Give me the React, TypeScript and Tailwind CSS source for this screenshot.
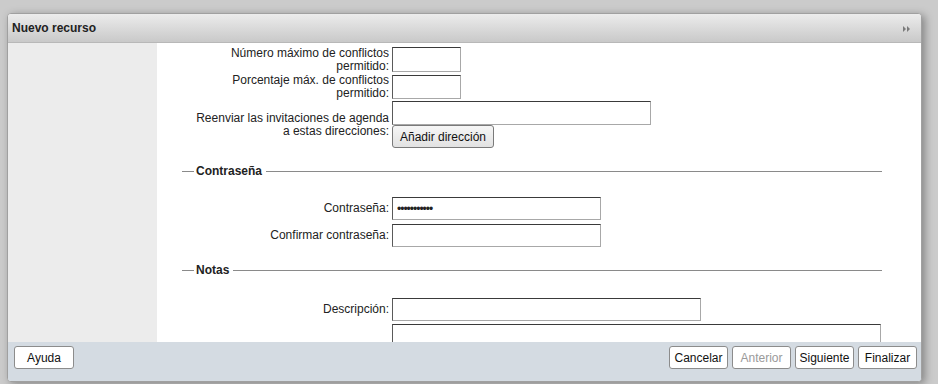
import React from "react";

const inputCls =
  "border border-t-[#3a3a3a] border-l-[#5a5a5a] border-r-[#a8a8a8] border-b-[#a8a8a8] bg-white px-1 text-[12px] outline-none";

const btnCls =
  "h-[23px] w-[59px] rounded-[3px] border border-[#8c8c8c] bg-white text-[12px] leading-none";

function Row({
  label,
  children,
  className = "",
}: {
  label: string;
  children: React.ReactNode;
  className?: string;
}) {
  return (
    <div className={`flex items-center ${className}`}>
      <div className="flex w-[235px] shrink-0 justify-end pr-[3px]">
        <span className="max-w-[196px] text-right leading-[13px]">{label}</span>
      </div>
      <div className="flex flex-col">{children}</div>
    </div>
  );
}

function Legend({ title, className = "" }: { title: string; className?: string }) {
  return (
    <div className={`ml-[25px] mr-[39px] flex h-[14px] items-center ${className}`}>
      <div className="h-px w-[12px] bg-[#8a8a8a]" />
      <span className="pl-[2px] pr-[4px] text-[12px] font-bold leading-[14px] text-[#222]">
        {title}
      </span>
      <div className="h-px flex-1 bg-[#8a8a8a]" />
    </div>
  );
}

export default function App() {
  return (
    <div
      className="h-[384px] w-[938px] overflow-hidden bg-[#cbcbcb] pl-[7px] pt-[13px] text-[12px] text-[#222]"
      style={{ fontFamily: '"Liberation Sans", Arial, sans-serif' }}
    >
      <div className="flex h-[369px] w-[915px] flex-col overflow-hidden rounded-[4px] border border-[#a0a0a0] bg-white shadow-[3px_2px_8px_rgba(0,0,0,0.35)]">
        {/* Header */}
        <div className="flex h-[29px] shrink-0 items-center justify-between border-b border-[#b8b8b8] bg-gradient-to-b from-[#ececec] to-[#c9c9c9] pl-[4px] pr-[10px]">
          <span className="text-[12px] font-bold text-[#222]">Nuevo recurso</span>
          <svg width="8" height="6" viewBox="0 0 8 6" className="mt-[2px]">
            <polygon points="0,0 3,3 0,6" fill="#7a7a7a" />
            <polygon points="4,0 7,3 4,6" fill="#7a7a7a" />
          </svg>
        </div>

        {/* Body */}
        <div className="flex min-h-0 flex-1">
          <div className="w-[149px] shrink-0 bg-[#ececec]" />
          <div className="min-w-0 flex-1 overflow-hidden bg-white pt-[4px]">
            <Row label="Número máximo de conflictos permitido:" className="mb-[3px] h-[25px]">
              <input className={`${inputCls} h-[25px] w-[69px]`} />
            </Row>
            <Row label="Porcentaje máx. de conflictos permitido:" className="mb-[3px] h-[23px]">
              <input className={`${inputCls} h-[24px] w-[69px]`} />
            </Row>
            <Row label="Reenviar las invitaciones de agenda a estas direcciones:">
              <input className={`${inputCls} h-[24px] w-[259px]`} />
              <button className="h-[23px] w-[102px] rounded-[3px] border border-[#7a7a7a] bg-gradient-to-b from-[#f6f6f6] to-[#e2e2e2] text-[12px] leading-none text-[#111]">
                Añadir dirección
              </button>
            </Row>

            <Legend title="Contraseña" className="mt-[16px]" />

            <Row label="Contraseña:" className="mb-[4px] mt-[19px]">
              <input
                type="password"
                defaultValue="contraseña1"
                className={`${inputCls} h-[23px] w-[209px] bg-[#e8f0fe] text-[10px] tracking-[-1px]`}
              />
            </Row>
            <Row label="Confirmar contraseña:">
              <input type="password" className={`${inputCls} h-[23px] w-[209px]`} />
            </Row>

            <Legend title="Notas" className="mt-[16px]" />

            <Row label="Descripción:" className="mb-[3px] mt-[21px]">
              <input className={`${inputCls} h-[23px] w-[309px]`} />
            </Row>
            <div className="pl-[235px]">
              <div className="h-[40px] w-[489px] border border-t-[#3a3a3a] border-l-[#5a5a5a] border-r-[#a8a8a8] border-b-[#a8a8a8] bg-white" />
            </div>
          </div>
        </div>

        {/* Footer */}
        <div className="flex h-[39px] shrink-0 items-start justify-between bg-[#d4dbe2] pl-[6px] pr-[4px] pt-[4px]">
          <button className={`${btnCls} w-[60px] text-[#111]`}>Ayuda</button>
          <div className="flex gap-[4px]">
            <button className={`${btnCls} text-[#111]`}>Cancelar</button>
            <button className={`${btnCls} text-[#9a9a9a]`} disabled>
              Anterior
            </button>
            <button className={`${btnCls} text-[#111]`}>Siguiente</button>
            <button className={`${btnCls} text-[#111]`}>Finalizar</button>
          </div>
        </div>
      </div>
    </div>
  );
}
